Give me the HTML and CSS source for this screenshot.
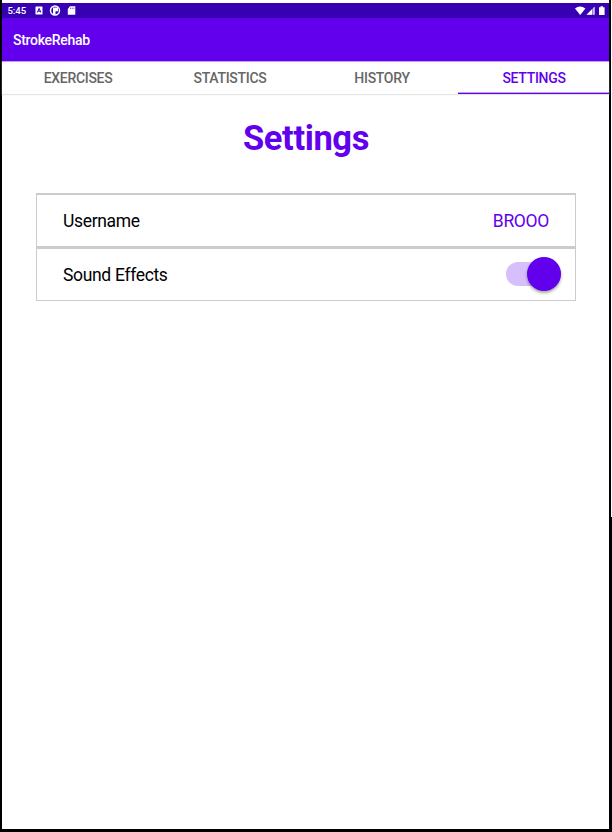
FILE: index.html
```html
<!DOCTYPE html>
<html lang="en">
<head>
<meta charset="utf-8">
<title>StrokeRehab</title>
<link rel="stylesheet" href="styles.css">
</head>
<body>
<div class="device">
  <div class="screen">
    <div class="status">
      <span class="clock">5:45</span>
      <svg class="notices" width="44" height="12" viewBox="0 0 44 12">
        <rect x="1.5" y="1.500" width="7" height="8" rx=".6" fill="#fff"/>
        <path d="M3.3 7.500 5 3.500h.2L6.8 7.500M4 6.200h2.2" fill="none" stroke="#3700b3" stroke-width="1"/>
        <circle cx="21" cy="5.500" r="4.500" fill="none" stroke="#fff" stroke-width="1.5"/>
        <path d="M19 2.500h5v3.700h-2.500V9.500H19z" fill="#fff"/>
        <path d="M36 1.300h5.300v8.500h-7.500V4z" fill="#fff"/>
        <path d="M36.5 2.600v1.5M38.200 2.600v1.5M39.9 2.600v1.5" stroke="#3700b3" stroke-width=".6"/>
      </svg>
      <svg class="signals" width="32" height="12" viewBox="0 0 32 12">
        <path d="M0 3.500Q5-.6 10.400 3.500L5.200 10z" fill="#fff"/>
        <path d="M11.500 9.800 19.500 1.800V9.800z" fill="#fff" opacity=".5"/>
        <path d="M11.500 9.800 17 4.300V9.800zM18.500 2.800l1-1v8h-1z" fill="#fff"/>
        <path d="M25.500 1.300h2.500v1h1.600v7.800h-5.600V2.300h1.500z" fill="#fff"/>
      </svg>
    </div>
    <header class="appbar">StrokeRehab</header>
    <nav class="tabs">
      <span class="tab">EXERCISES</span>
      <span class="tab">STATISTICS</span>
      <span class="tab">HISTORY</span>
      <span class="tab active">SETTINGS</span>
    </nav>
    <main class="content">
      <h1 class="title">Settings</h1>
      <div class="list">
        <div class="row"><span>Username</span><span class="value">BROOO</span></div>
        <div class="row"><span>Sound Effects</span><span class="switch"><span class="thumb"></span></span></div>
      </div>
    </main>
  </div>
  <div class="edge"></div>
</div>
</body>
</html>
```
FILE: styles.css
```css
* { box-sizing: border-box; }
body { margin: 0; background: #fff; font-family: Roboto, sans-serif; }
.device { display: flex; width: 612px; height: 832px; background: #000; padding-left: 2px; }
.screen { width: 607px; height: 829px; background: #fff; padding-top: 3px; }
.edge { width: 1px; height: 517px; margin-left: 2px; background: #fff; }
.status { display: flex; align-items: center; height: 15px; padding: 0 2px 0 5.500px; background: #3700b3; color: #fff; }
.clock { width: 26px; font-size: 9.600px; font-weight: 500; line-height: 15px; letter-spacing: -.1px; }
.signals { margin-left: auto; }
.appbar { height: 43px; padding-left: 11px; background: #6200ee; color: #fff; font-size: 14px; font-weight: 500; line-height: 45px; letter-spacing: -.3px; }
.tabs { display: grid; grid-template-columns: 152px 152px 152px 151px; height: 33px; border-top: 1px solid #c79ff8; box-shadow: 0 1px 1px #e4e4e4; }
.tab { height: 32px; text-align: center; color: #666; font-size: 14px; font-weight: 500; line-height: 33px; letter-spacing: -.3px; }
.active { color: #6200ee; border-bottom: 1px solid #6200ee; box-shadow: inset 0 -1px #c79ff8; padding-left: 1px; }
.content { padding: 24px 33px 0 34px; }
.title { margin: 0; height: 75px; color: #6200ee; font-size: 34.500px; font-weight: 700; line-height: 40px; letter-spacing: -.4px; text-align: center; }
.list { border: 1px solid #ccc; border-top-width: 2px; }
.row { display: flex; align-items: center; justify-content: space-between; height: 51px; padding: 1px 26px 0; font-size: 17.500px; letter-spacing: -.33px; color: #000; }
.row + .row { height: 54px; border-top: 3px solid #ccc; padding: 1px 14.500px 0 26px; }
.value { color: #6200ee; }
.switch { display: flex; justify-content: flex-end; align-items: center; width: 55px; height: 24px; margin-bottom: 2px; border-radius: 12px; background: #d6bffa; }
.thumb { width: 34px; height: 34px; flex: none; border-radius: 50%; background: #6200ee; box-shadow: 0 2px 3px rgba(0,0,0,.35); }
```
